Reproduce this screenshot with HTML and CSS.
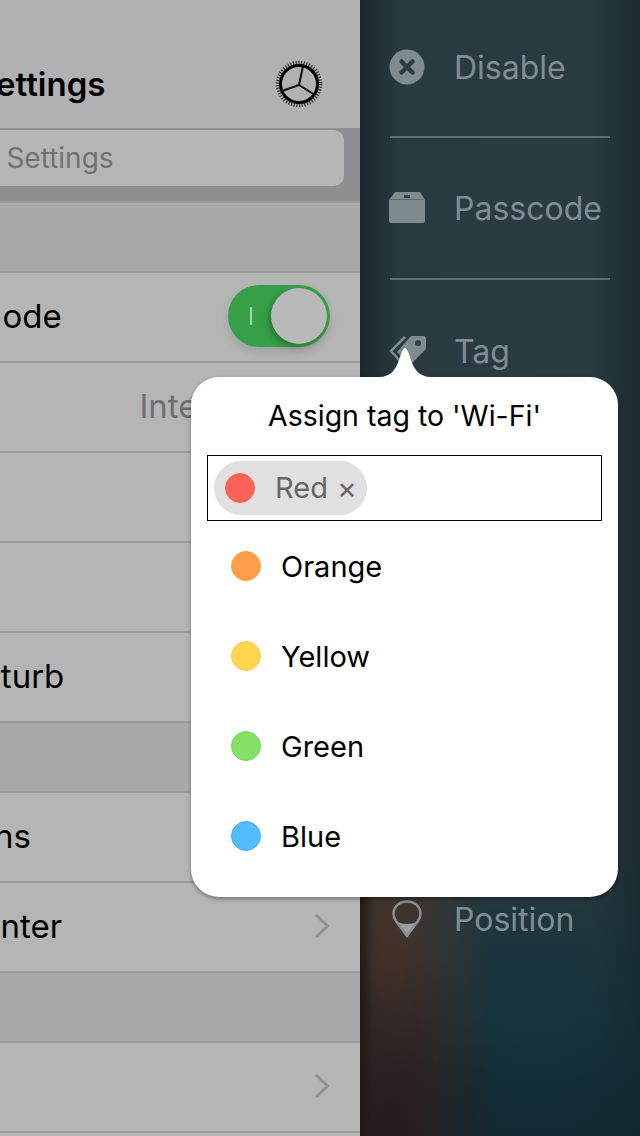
FILE: index.html
```html
<!DOCTYPE html>
<html lang="en">
<head>
    <meta charset="UTF-8">
    <title>Settings</title>
    <link rel="stylesheet" href="styles.css">
</head>
<body>
    <div class="app">
        <div class="settings">
            <div class="settings-inner">
                <div class="nav">
                    <span></span>
                    <h1>Settings</h1>
                    <svg class="gear" width="50" height="50" viewBox="0 0 50 50">
                        <circle class="gear-teeth" cx="25" cy="25" r="21.5"/>
                        <circle class="gear-ring" cx="25" cy="25" r="18.5"/>
                        <path class="gear-spokes" d="M25 26 L29 7 M25 26 L41 36 M25 26 L8 32"/>
                    </svg>
                </div>
                <div class="search"><div class="search-field">Settings</div></div>
                <div class="section"></div>
                <div class="row">
                    <span class="label">Airplane Mode</span>
                    <div class="toggle"><span class="toggle-mark"></span><span class="toggle-thumb"></span></div>
                </div>
                <div class="row">
                    <span class="label">Wi-Fi</span>
                    <span class="value">Internet</span>
                    <svg class="chevron" width="16" height="26" viewBox="0 0 16 26"><path d="M2 2 L13.500 13 L2 24"/></svg>
                </div>
                <div class="row">
                    <span class="label">Bluetooth</span>
                    <svg class="chevron" width="16" height="26" viewBox="0 0 16 26"><path d="M2 2 L13.500 13 L2 24"/></svg>
                </div>
                <div class="row">
                    <span class="label">Cellular</span>
                    <svg class="chevron" width="16" height="26" viewBox="0 0 16 26"><path d="M2 2 L13.500 13 L2 24"/></svg>
                </div>
                <div class="row">
                    <span class="label">Do Not Disturb</span>
                    <svg class="chevron" width="16" height="26" viewBox="0 0 16 26"><path d="M2 2 L13.500 13 L2 24"/></svg>
                </div>
                <div class="section"></div>
                <div class="row">
                    <span class="label">Notifications</span>
                    <svg class="chevron" width="16" height="26" viewBox="0 0 16 26"><path d="M2 2 L13.500 13 L2 24"/></svg>
                </div>
                <div class="row">
                    <span class="label">Control Center</span>
                    <svg class="chevron" width="16" height="26" viewBox="0 0 16 26"><path d="M2 2 L13.500 13 L2 24"/></svg>
                </div>
                <div class="section"></div>
                <div class="row">
                    <span class="label">General</span>
                    <svg class="chevron" width="16" height="26" viewBox="0 0 16 26"><path d="M2 2 L13.500 13 L2 24"/></svg>
                </div>
            </div>
        </div>

        <div class="menu">
            <div class="menu-item menu-line">
                <svg class="menu-icon" width="36" height="36" viewBox="0 0 36 36">
                    <circle cx="17" cy="18" r="17.500" fill="#7e8c90"/>
                    <path d="M11.500 12.500 L22.500 23.500 M22.500 12.500 L11.500 23.500" stroke="#2b3c42" stroke-width="4.500" stroke-linecap="round"/>
                </svg>
                <span>Disable</span>
            </div>
            <div class="menu-item menu-line">
                <svg class="menu-icon" width="36" height="36" viewBox="0 0 36 36">
                    <path d="M5 2 H30 L35 10 V31 Q35 33 33 33 H1 Q-1 33 -1 31 V10 Z" fill="#7e8c90"/>
                    <path d="M0 9.500 H35" stroke="#5a6b70" stroke-width="1"/>
                    <path d="M14 5 H20 V8 H14 Z" fill="#33464c"/>
                </svg>
                <span>Passcode</span>
            </div>
            <div class="menu-item">
                <svg class="menu-icon" width="36" height="36" viewBox="0 0 36 36">
                    <path d="M21 3 H33 Q36 3 36 6 V16 L20 32 L7 19 Z" fill="#7e8c90"/>
                    <path d="M15 4 L1 18 L12 30" fill="none" stroke="#7e8c90" stroke-width="2.500"/>
                    <circle cx="28" cy="10" r="3" fill="#2b4750"/>
                </svg>
                <span>Tag</span>
            </div>
            <div class="menu-gap"></div>
            <div class="menu-item">
                <svg class="menu-icon" width="36" height="38" viewBox="0 0 36 38">
                    <path d="M7 22 Q12 24 17 24 Q22 24 27 22 L17 37 Z" fill="#9a9e9c"/>
                    <path d="M17 36 L6 21 C4 18 3.500 16 3.500 14 C3.500 6.500 9.500 1.500 17 1.500 C24.500 1.500 30.500 6.500 30.500 14 C30.500 16 30 18 28 21 Z" fill="none" stroke="#8a9090" stroke-width="2.500"/>
                </svg>
                <span>Position</span>
            </div>
        </div>

        <div class="popup">
            <svg class="popup-arrow" width="52" height="31" viewBox="0 0 52 31">
                <path d="M0 30 C12 30 17 22 20 13 C22 7 24 1 26 1 C28 1 30 7 32 13 C35 22 40 30 52 30 V31 H0 Z"/>
            </svg>
            <div class="popup-title">Assign tag to 'Wi-Fi'</div>
            <div class="tag-input">
                <div class="chip">
                    <span class="dot dot-red"></span>
                    <span class="chip-text">Red</span>
                    <span class="chip-close">×</span>
                </div>
            </div>
            <div class="tag-row"><span class="dot dot-orange"></span>Orange</div>
            <div class="tag-row"><span class="dot dot-yellow"></span>Yellow</div>
            <div class="tag-row"><span class="dot dot-green"></span>Green</div>
            <div class="tag-row"><span class="dot dot-blue"></span>Blue</div>
        </div>
    </div>
</body>
</html>
```

FILE: styles.css
```css
* {
    box-sizing: border-box;
}
body {
    margin: 0;
    font-family: Inter, "Noto Sans", sans-serif;
    font-size: 29px;
    color: #000;
}
.app {
    position: relative;
    display: flex;
    width: 640px;
    height: 1136px;
    overflow: hidden;
}

/* settings list, pushed off the left edge */
.settings {
    width: 360px;
    height: 1136px;
    overflow: hidden;
    background: #b5b5b5;
}
.settings-inner {
    width: 640px;
    margin-left: -280px;
}
.nav {
    display: grid;
    grid-template-columns: 1fr auto 1fr;
    align-items: center;
    height: 130px;
    padding: 40px 36px 0;
    background: #b1b1b3;
    border-bottom: 2px solid #8f8f91;
}
.nav h1 {
    margin: 0;
    font-size: 33px;
    font-weight: 600;
}
.gear {
    justify-self: end;
}
.gear-teeth {
    fill: none;
    stroke: #333;
    stroke-width: 3.5;
    stroke-dasharray: 1.2 1.5;
}
.gear-ring {
    fill: none;
    stroke: #000;
    stroke-width: 3;
}
.gear-spokes {
    fill: none;
    stroke: #111;
    stroke-width: 2;
}
.search {
    height: 73px;
    padding: 0 16px;
    background: #8f8e93;
    border-bottom: 2px solid #9a9a9c;
}
.search-field {
    height: 56px;
    padding-left: 40px;
    border-radius: 10px;
    background: #b5b5b5;
    color: #717171;
    font-size: 28px;
    line-height: 56px;
    text-align: center;
}
.section {
    height: 70px;
    background: #a9a9ab;
    border-bottom: 2px solid #9a9a9a;
}
.row {
    display: flex;
    align-items: center;
    height: 90px;
    padding: 0 30px 2px 114px;
    font-size: 33px;
    border-bottom: 2px solid #9a9a9a;
}
.label {
    margin-right: auto;
}
.value {
    margin-right: 54px;
    color: #6f6f6f;
}
.chevron {
    flex-shrink: 0;
}
.chevron path {
    fill: none;
    stroke: #909092;
    stroke-width: 3;
}
.toggle {
    display: flex;
    align-items: center;
    justify-content: space-between;
    width: 102px;
    height: 62px;
    padding: 0 3px 0 22px;
    border-radius: 31px;
    background: #35a048;
    box-shadow: 0 5px 10px rgba(0, 0, 0, 0.12);
}
.toggle-mark {
    width: 2px;
    height: 18px;
    background: #a9cfb0;
}
.toggle-thumb {
    width: 56px;
    height: 56px;
    border-radius: 50%;
    background: #b9b9b9;
    box-shadow: -3px 3px 6px rgba(0, 0, 0, 0.25);
}

/* dark side menu */
.menu {
    flex: 1;
    height: 1136px;
    padding: 0 30px;
    color: #7f8e92;
    background:
        linear-gradient(90deg, rgba(30, 20, 20, 0.8) 0, rgba(30, 20, 20, 0) 14px) 0 880px / 100% 256px no-repeat,
        radial-gradient(ellipse 110px 210px at 30px 1136px, rgba(40, 26, 26, 0.95), rgba(40, 26, 26, 0) 100%),
        radial-gradient(ellipse 100px 260px at 30px 960px, rgba(74, 52, 42, 0.95), rgba(74, 52, 42, 0) 100%),
        radial-gradient(circle at 175px 1010px, rgba(22, 56, 66, 0.7), rgba(22, 56, 66, 0) 165px),
        linear-gradient(180deg, rgba(16, 38, 46, 0) 860px, rgba(16, 38, 46, 0.95) 1090px),
        linear-gradient(90deg, #1a282c 0, #293a40 40px, #2a3b41 230px, #1b2b30 280px);
}
.menu-item {
    display: flex;
    align-items: center;
    gap: 28px;
    height: 142px;
    font-size: 32px;
}
.menu-line {
    border-bottom: 2px solid #5f6e72;
}
.menu-item:first-child {
    height: 138px;
    padding-bottom: 2px;
}
.menu-gap {
    height: 426px;
}
.menu-icon {
    flex-shrink: 0;
    overflow: visible;
}

/* tag popover */
.popup {
    position: absolute;
    top: 377px;
    left: 191px;
    width: 427px;
    height: 520px;
    padding: 0 16px;
    border-radius: 28px;
    background: #fff;
    box-shadow: 0 2px 4px rgba(0, 0, 0, 0.35);
}
.popup-arrow {
    position: absolute;
    top: -30px;
    left: 188px;
}
.popup-arrow path {
    fill: #fff;
}
.popup-title {
    height: 78px;
    font-size: 28.500px;
    line-height: 78px;
    text-align: center;
}
.tag-input {
    display: flex;
    align-items: center;
    height: 66px;
    padding-left: 6px;
    border: 1px solid #000;
}
.chip {
    display: flex;
    align-items: center;
    gap: 20px;
    width: 153px;
    height: 54px;
    padding: 0 0 1px 11px;
    border-radius: 27px;
    background: #e0e0e0;
    color: #666;
}
.chip-close {
    margin-left: -11px;
    font-size: 30px;
}
.chip .dot {
    margin-top: 1px;
}
.tag-row {
    display: flex;
    align-items: center;
    gap: 20px;
    height: 90px;
    padding-left: 24px;
}
.dot {
    flex-shrink: 0;
    width: 30px;
    height: 30px;
    border-radius: 50%;
    border: 1px solid;
}
.dot-red { background: #ff6259; border-color: #ff6259; }
.dot-orange { background: #ff9d4d; border-color: #ffa033; }
.dot-yellow { background: #ffd44f; border-color: #ffcf38; }
.dot-green { background: #85e065; border-color: #78d858; }
.dot-blue { background: #52bcff; border-color: #45b0f0; }
```
